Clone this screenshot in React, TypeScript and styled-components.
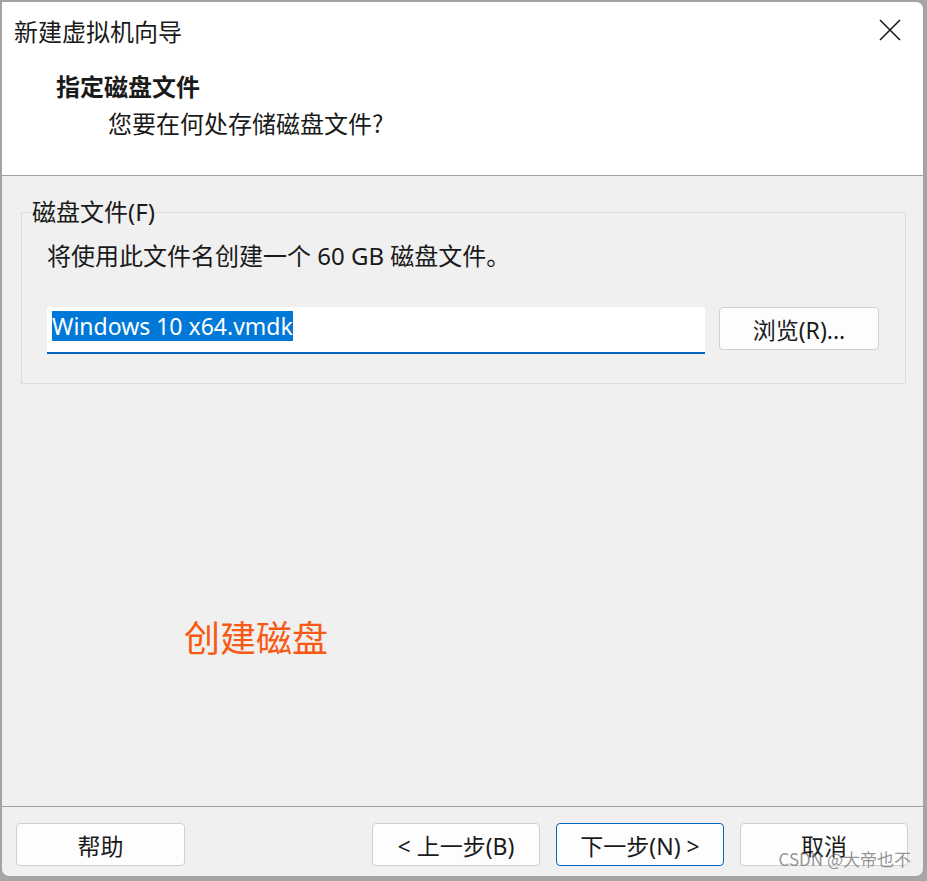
import React from "react";
import styled, { createGlobalStyle } from "styled-components";

const GlobalStyle = createGlobalStyle`
  html, body {
    margin: 0;
    padding: 0;
    background: #a6a6a6;
  }
  body {
    font-family: "Noto Sans", "Noto Sans CJK SC", sans-serif;
    color: #1a1a1a;
  }
`;

const Window = styled.div`
  position: relative;
  display: flex;
  flex-direction: column;
  width: 921px;
  height: 874px;
  background: #f0f0f0;
  border: 2px solid #a3a3a3;
  border-radius: 0 9px 9px 9px;
  overflow: hidden;
`;

const Header = styled.header`
  display: flex;
  flex-direction: column;
  height: 173px;
  background: #ffffff;
  border-bottom: 1px solid #a0a0a0;
`;

const TitleBar = styled.div`
  display: flex;
  align-items: center;
  justify-content: space-between;
  height: 56px;
  padding: 0 18px 0 12px;
`;

const Title = styled.span`
  font-family: "Noto Sans CJK SC", sans-serif;
  font-size: 24px;
`;

const CloseButton = styled.button`
  display: flex;
  align-items: center;
  justify-content: center;
  width: 30px;
  height: 30px;
  padding: 0;
  border: none;
  background: transparent;
`;

const HeaderText = styled.div`
  display: flex;
  flex-direction: column;
  padding-left: 54px;
  margin-top: 12px;
  gap: 5px;
`;

const Heading = styled.div`
  font-family: "Noto Sans CJK SC", sans-serif;
  font-weight: 700;
  font-size: 24px;
  line-height: 32px;
`;

const SubHeading = styled.div`
  font-family: "Noto Sans CJK SC", sans-serif;
  font-size: 24px;
  line-height: 32px;
  padding-left: 52px;
`;

const Body = styled.main`
  display: flex;
  flex: 1;
  flex-direction: column;
  padding: 20px 17px 0 19px;
`;

const GroupBox = styled.fieldset`
  margin: 0;
  padding: 0 26px 29px 25px;
  border: 1px solid #dcdcdc;
  min-width: 0;
`;

const Legend = styled.legend`
  margin-left: -16px;
  padding: 0 1px;
  font-size: 24px;
  line-height: 32px;
`;

const Description = styled.p`
  margin: 12px 0 0;
  font-size: 24px;
  line-height: 32px;
`;

const FileRow = styled.div`
  display: flex;
  gap: 14px;
  margin-top: 35px;
`;

const FileInput = styled.div`
  display: flex;
  align-items: center;
  flex: 1;
  height: 45px;
  padding: 0 5px;
  background: #ffffff;
  border-bottom: 2px solid #0067c0;
  border-radius: 3px 3px 0 0;
  box-sizing: content-box;
`;

const Selection = styled.span`
  background: #0078d7;
  color: #ffffff;
  font-size: 23px;
  line-height: 30px;
  margin-top: -8px;
`;

const Button = styled.button<{ $primary?: boolean; $width?: number }>`
  display: flex;
  align-items: center;
  justify-content: center;
  width: ${(p) => p.$width ?? 168}px;
  height: 43px;
  padding: 0;
  background: #fdfdfd;
  border: 1px solid ${(p) => (p.$primary ? "#0067c0" : "#d0d0d0")};
  border-radius: 4px;
  font-family: "Noto Sans", "Noto Sans CJK SC", sans-serif;
  font-size: 23px;
  color: #1a1a1a;
`;

const Note = styled.div`
  margin: 226px 0 0 163px;
  font-family: "Noto Sans CJK SC", sans-serif;
  font-size: 36px;
  color: #f85a16;
`;

const Footer = styled.footer`
  display: flex;
  align-items: flex-start;
  justify-content: space-between;
  height: 70px;
  padding: 16px 15px 0 14px;
  border-top: 1px solid #a0a0a0;
  box-sizing: border-box;
`;

const ButtonGroup = styled.div`
  display: flex;
  gap: 16px;
`;

const Watermark = styled.div`
  position: absolute;
  right: 12px;
  bottom: 5px;
  font-family: "Noto Sans CJK SC", sans-serif;
  font-size: 17px;
  color: rgba(120, 120, 120, 0.8);
  pointer-events: none;
`;

const CloseIcon = () => (
  <svg width="24" height="24" viewBox="0 0 24 24">
    <path d="M2 2 L22 22 M22 2 L2 22" stroke="#1a1a1a" strokeWidth="1.6" fill="none" />
  </svg>
);

export default function App() {
  return (
    <>
      <GlobalStyle />
      <Window>
        <Header>
          <TitleBar>
            <Title>新建虚拟机向导</Title>
            <CloseButton aria-label="关闭">
              <CloseIcon />
            </CloseButton>
          </TitleBar>
          <HeaderText>
            <Heading>指定磁盘文件</Heading>
            <SubHeading>您要在何处存储磁盘文件?</SubHeading>
          </HeaderText>
        </Header>
        <Body>
          <GroupBox>
            <Legend>磁盘文件(F)</Legend>
            <Description>将使用此文件名创建一个 60 GB 磁盘文件。</Description>
            <FileRow>
              <FileInput>
                <Selection>Windows 10 x64.vmdk</Selection>
              </FileInput>
              <Button $width={160}>浏览(R)...</Button>
            </FileRow>
          </GroupBox>
          <Note>创建磁盘</Note>
        </Body>
        <Footer>
          <Button $width={169}>帮助</Button>
          <ButtonGroup>
            <Button>&lt; 上一步(B)</Button>
            <Button $primary>下一步(N) &gt;</Button>
            <Button>取消</Button>
          </ButtonGroup>
        </Footer>
        <Watermark>CSDN @大帝也不</Watermark>
      </Window>
    </>
  );
}
